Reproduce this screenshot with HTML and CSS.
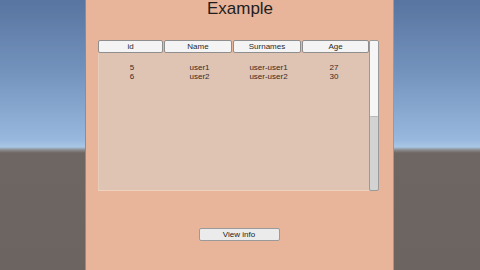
FILE: index.html
```html
<!DOCTYPE html>
<html>
<head>
<meta charset="utf-8">
<link rel="stylesheet" href="styles.css">
</head>
<body>
<div class="scene">
  <div class="panel">
    <h1 class="title">Example</h1>
    <div class="table">
      <div class="table-main">
        <div class="head">
          <div class="hcell">id</div>
          <div class="hcell">Name</div>
          <div class="hcell">Surnames</div>
          <div class="hcell">Age</div>
        </div>
        <div class="body">
          <div class="row">
            <span>5</span><span>user1</span><span>user-user1</span><span class="age">27</span>
          </div>
          <div class="row">
            <span>6</span><span>user2</span><span>user-user2</span><span class="age">30</span>
          </div>
        </div>
      </div>
      <div class="scrollbar"><div class="thumb"></div></div>
    </div>
    <div class="actions">
      <button class="btn">View info</button>
    </div>
  </div>
</div>
</body>
</html>
```
FILE: styles.css
```css
html, body {
  margin: 0;
  padding: 0;
}
body {
  width: 480px;
  height: 270px;
  overflow: hidden;
  font-family: "Liberation Sans", Arial, sans-serif;
  background: linear-gradient(to bottom,
    #5874a0 0px,
    #7292bc 70px,
    #98b8de 140px,
    #a9c7e6 147px,
    #8a8a8c 150px,
    #6e6662 153px,
    #6c6461 270px);
}
.scene {
  display: flex;
  height: 270px;
}
.panel {
  margin-left: 85px;
  width: 307px;
  height: 270px;
  background: #e8b59b;
  border-left: 1px solid #9a8885;
  border-right: 1px solid #a99590;
  display: flex;
  flex-direction: column;
}
.title {
  margin: 0;
  height: 40px;
  font-weight: normal;
  font-size: 17px;
  line-height: 18px;
  color: #1e1e1e;
  text-align: center;
  padding-left: 1px;
}
.table {
  margin-left: 12px;
  display: flex;
  height: 151px;
}
.table-main {
  width: 271px;
  display: flex;
  flex-direction: column;
}
.head {
  display: grid;
  grid-template-columns: 66px 69px 69px 67px;
  height: 13px;
}
.hcell {
  background: #f4f4f4;
  border: 1px solid #8e8e8e;
  border-radius: 2px;
  font-size: 8px;
  line-height: 11px;
  color: #2a2a2a;
  text-align: center;
  margin-right: 1px;
}
.hcell:last-child {
  margin-right: 0;
}
.body {
  flex: 1;
  background: #dfc4b3;
  border-left: 1px solid #e9cdbc;
  border-bottom: 1px solid #efd1bf;
  padding-top: 10px;
}
.row {
  display: grid;
  grid-template-columns: 66px 69px 69px 62px;
  font-size: 8px;
  line-height: 9px;
  color: #3a2a24;
  text-align: center;
}
.scrollbar {
  width: 10px;
  box-sizing: border-box;
  background: #d3d3d3;
  border: 1px solid #9a9a9a;
  border-radius: 2px;
  height: 151px;
}
.thumb {
  height: 75px;
  background: #f6f6f6;
  border-bottom: 1px solid #b8b8b8;
  border-radius: 1px;
}
.actions {
  display: flex;
  justify-content: center;
  margin-top: 37px;
  padding-right: 1px;
}
.btn {
  width: 81px;
  height: 13px;
  padding: 0;
  background: #ebebeb;
  border: 1px solid #9a9a9a;
  border-radius: 2px;
  font-family: "Liberation Sans", Arial, sans-serif;
  font-size: 8px;
  line-height: 11px;
  color: #222;
}
```
